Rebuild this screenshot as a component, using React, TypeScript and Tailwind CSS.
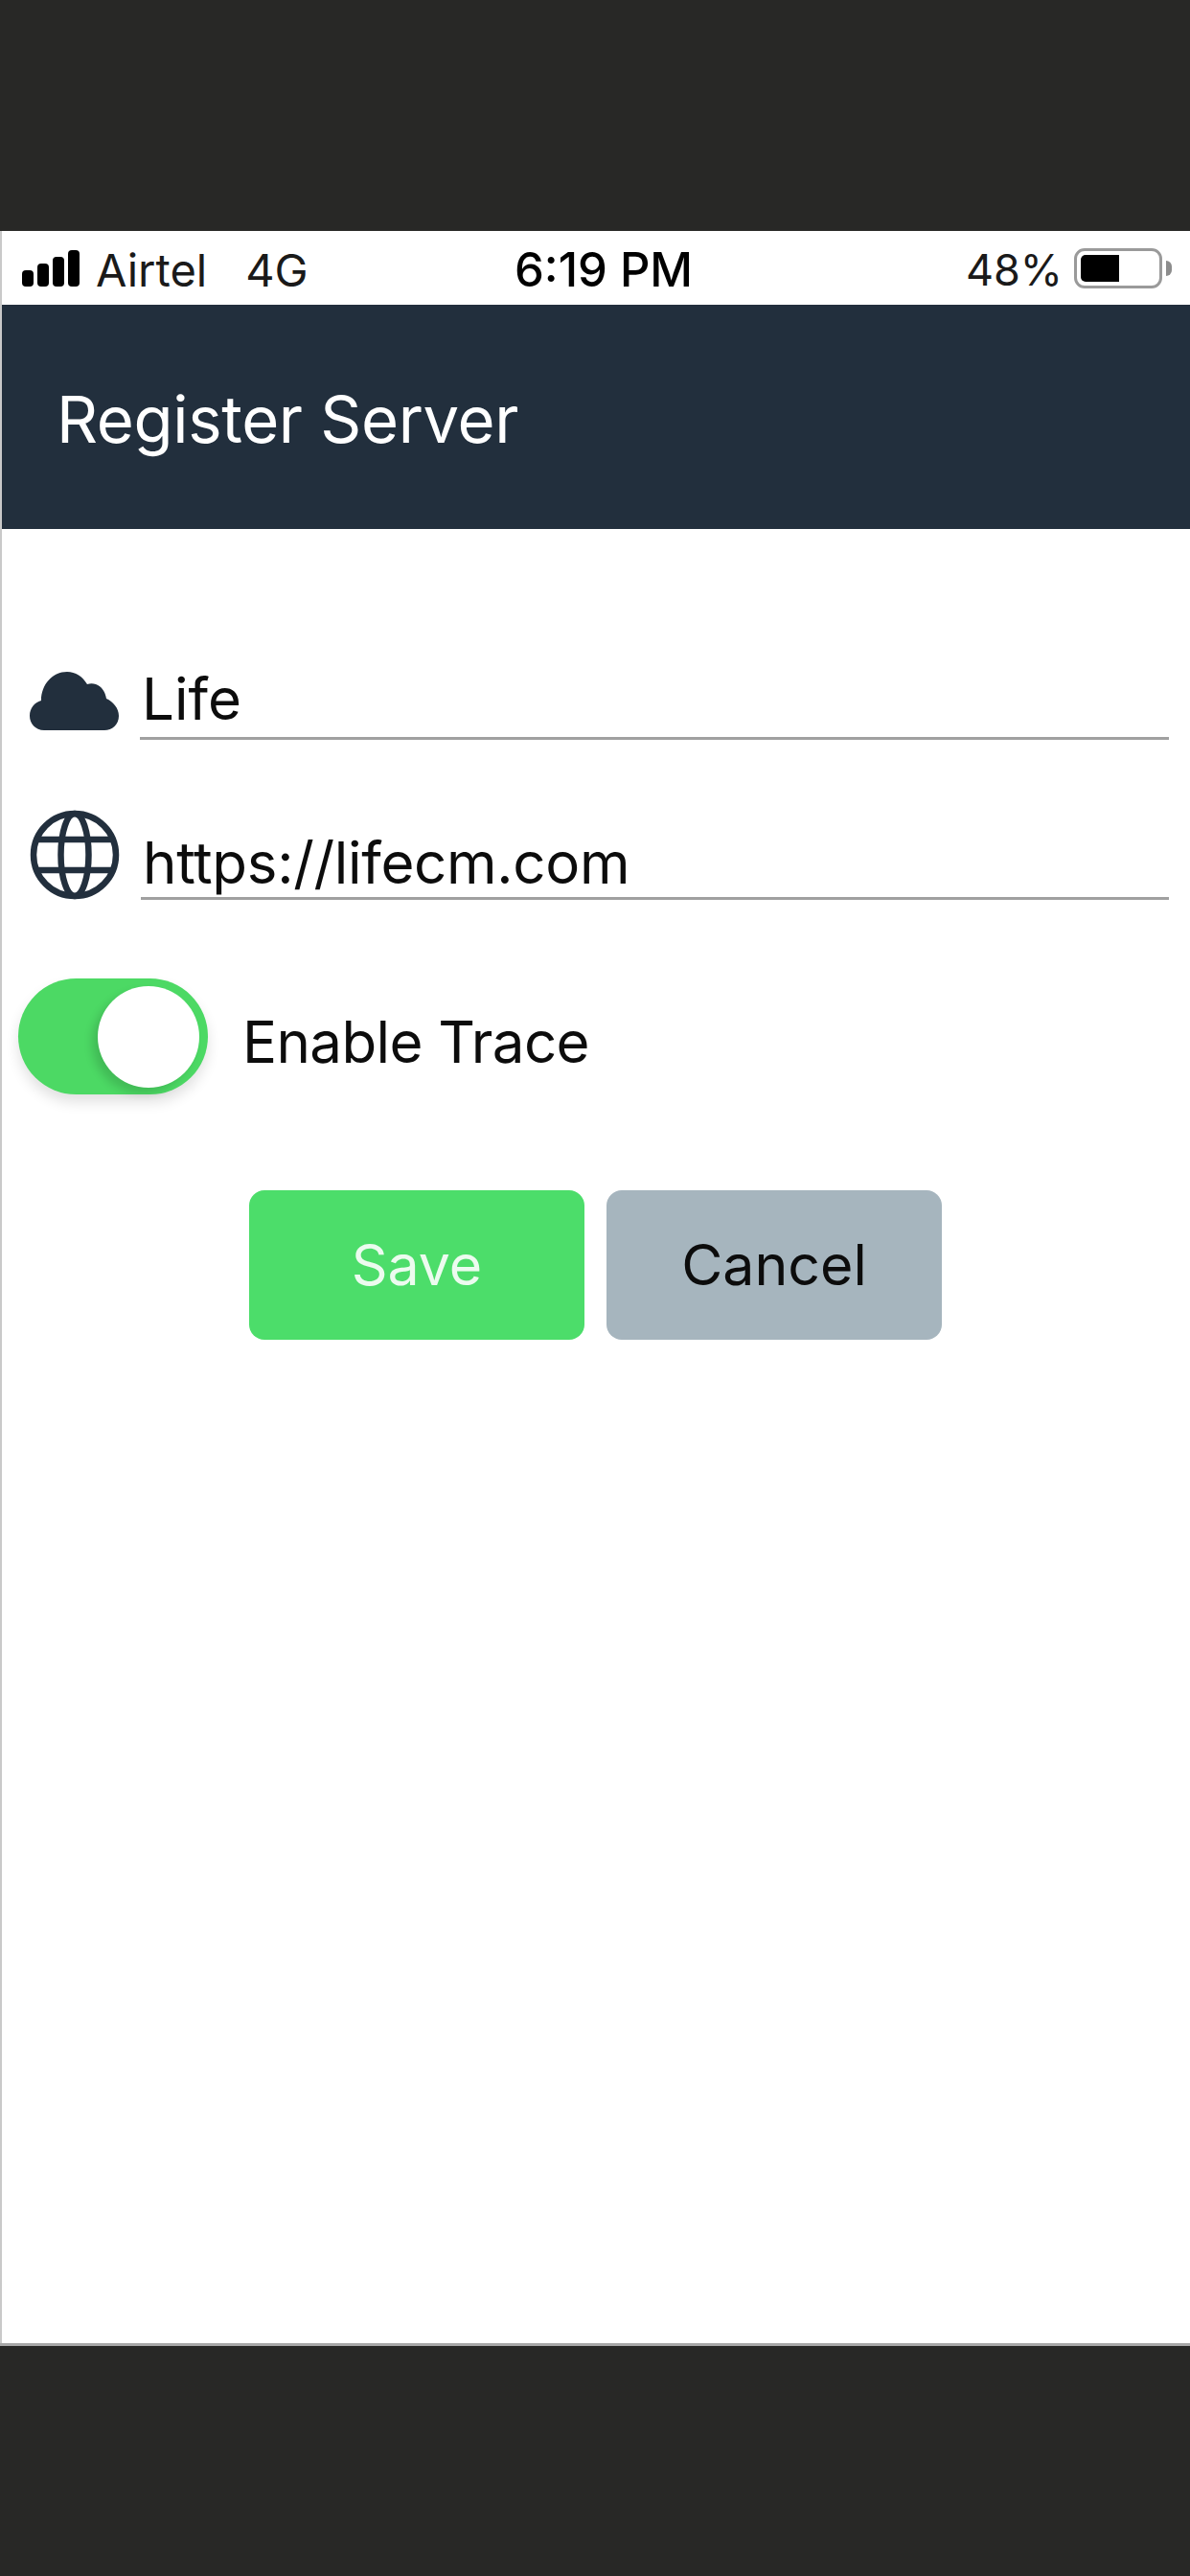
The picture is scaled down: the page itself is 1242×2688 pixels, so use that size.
const font = { fontFamily: 'Inter, "Liberation Sans", sans-serif' };

function SignalBars() {
  return (
    <div className="flex items-end gap-[4px]">
      <div className="h-[17px] w-[12px] rounded-[4px] bg-black" />
      <div className="h-[24px] w-[12px] rounded-[4px] bg-black" />
      <div className="h-[31px] w-[12px] rounded-[4px] bg-black" />
      <div className="h-[38px] w-[12px] rounded-[4px] bg-black" />
    </div>
  );
}

function Battery() {
  return (
    <div className="flex items-center gap-[4px]">
      <div className="h-[42px] w-[92px] rounded-[11px] border-[3px] border-[#9a9a9a] p-[4px]">
        <div className="h-full w-[40px] rounded-l-[5px] bg-black" />
      </div>
      <div className="h-[16px] w-[6px] rounded-r-full bg-[#8c8c8c]" />
    </div>
  );
}

function CloudIcon() {
  return (
    <svg width="93" height="61" viewBox="0 0 93 61" className="shrink-0">
      <path
        fill="#222f3d"
        d="M15 61 C6 61 0 54 0 46 C0 38 5 32 12 30 C12 13 24 0 39 0 C48 0 55 5 60 13 C63 12 66 12 69 13 C75 15 79 21 80 28 C87 31 93 38 93 46 C93 55 86 61 78 61 Z"
      />
    </svg>
  );
}

function GlobeIcon() {
  return (
    <svg width="94" height="94" viewBox="0 0 94 94" fill="none" stroke="#222f3d" strokeWidth="6.5" className="shrink-0">
      <circle cx="47" cy="47" r="43" />
      <ellipse cx="47" cy="47" rx="14.5" ry="43" />
      <path d="M8 31 H86" />
      <path d="M8 63 H86" />
    </svg>
  );
}

export default function App() {
  return (
    <div className="flex h-[2688px] w-[1242px] flex-col bg-[#282826] text-black" style={font}>
      <div className="h-[241px] shrink-0" />

      <div className="flex flex-1 flex-col border-l-2 border-[#c9c9c9] bg-white">
        {/* status bar */}
        <div className="grid h-[77px] shrink-0 grid-cols-[1fr_auto_1fr] items-center pl-[21px] pr-[19px] leading-none text-[#1a1a1a]">
          <div className="flex items-center text-[47px]">
            <SignalBars />
            <span className="ml-[17px] mt-[3px]">Airtel</span>
            <span className="ml-[40px] mt-[3px]">4G</span>
          </div>
          <span className="mt-[3px] ml-[14px] text-[49px] font-medium text-black">6:19 PM</span>
          <div className="flex items-center justify-end gap-[12px] text-[45px]">
            <span className="mt-[3px]">48%</span>
            <Battery />
          </div>
        </div>

        {/* header */}
        <div className="flex h-[234px] shrink-0 items-center bg-[#222f3d] pl-[57px]">
          <h1 className="mt-[5px] text-[67px] font-normal leading-none tracking-[-0.005em] text-white">Register Server</h1>
        </div>

        <div className="flex flex-1 flex-col">
          <div className="mt-[144px] flex h-[76px] items-start pl-[29px] pr-[22px]">
            <div className="mt-[5px]">
              <CloudIcon />
            </div>
            <div className="ml-[22px] flex h-[76px] flex-1 items-center border-b-[3px] border-[#a0a0a0] pb-[8px] pl-[2px] text-[60px] leading-none text-[#0c0c0c]">
              Life
            </div>
          </div>

          <div className="mt-[73px] flex h-[94px] items-end pl-[29px] pr-[22px]">
            <GlobeIcon />
            <div className="ml-[22px] flex h-[76px] flex-1 items-center border-b-[3px] border-[#a0a0a0] pl-[2px] text-[60px] leading-none tracking-[-0.005em] text-[#0c0c0c]">
              https://lifecm.com
            </div>
          </div>

          <div className="mt-[82px] flex items-center pl-[17px]">
            <div className="flex h-[121px] w-[198px] items-center justify-end rounded-full bg-[#4cd964] pr-[9px] shadow-[0_8px_14px_rgba(0,0,0,0.12)]">
              <div className="h-[106px] w-[106px] rounded-full bg-white shadow-[-6px_6px_10px_rgba(0,0,0,0.14)]" />
            </div>
            <span className="ml-[36px] mt-[11px] text-[60px] leading-none tracking-[-0.01em] text-[#0c0c0c]">Enable Trace</span>
          </div>

          <div className="mt-[100px] flex gap-[23px] pl-[258px]">
            <button className="flex h-[156px] w-[350px] items-center justify-center rounded-[16px] bg-[#4cdd6a] text-[59px] text-[#ecfbef]">
              Save
            </button>
            <button className="flex h-[156px] w-[350px] items-center justify-center rounded-[16px] bg-[#a6b5be] text-[59px] text-[#0c0c0c]">
              Cancel
            </button>
          </div>
        </div>
      </div>

      <div className="h-[243px] shrink-0 border-t-[3px] border-[#a8a8a8]" />
    </div>
  );
}
